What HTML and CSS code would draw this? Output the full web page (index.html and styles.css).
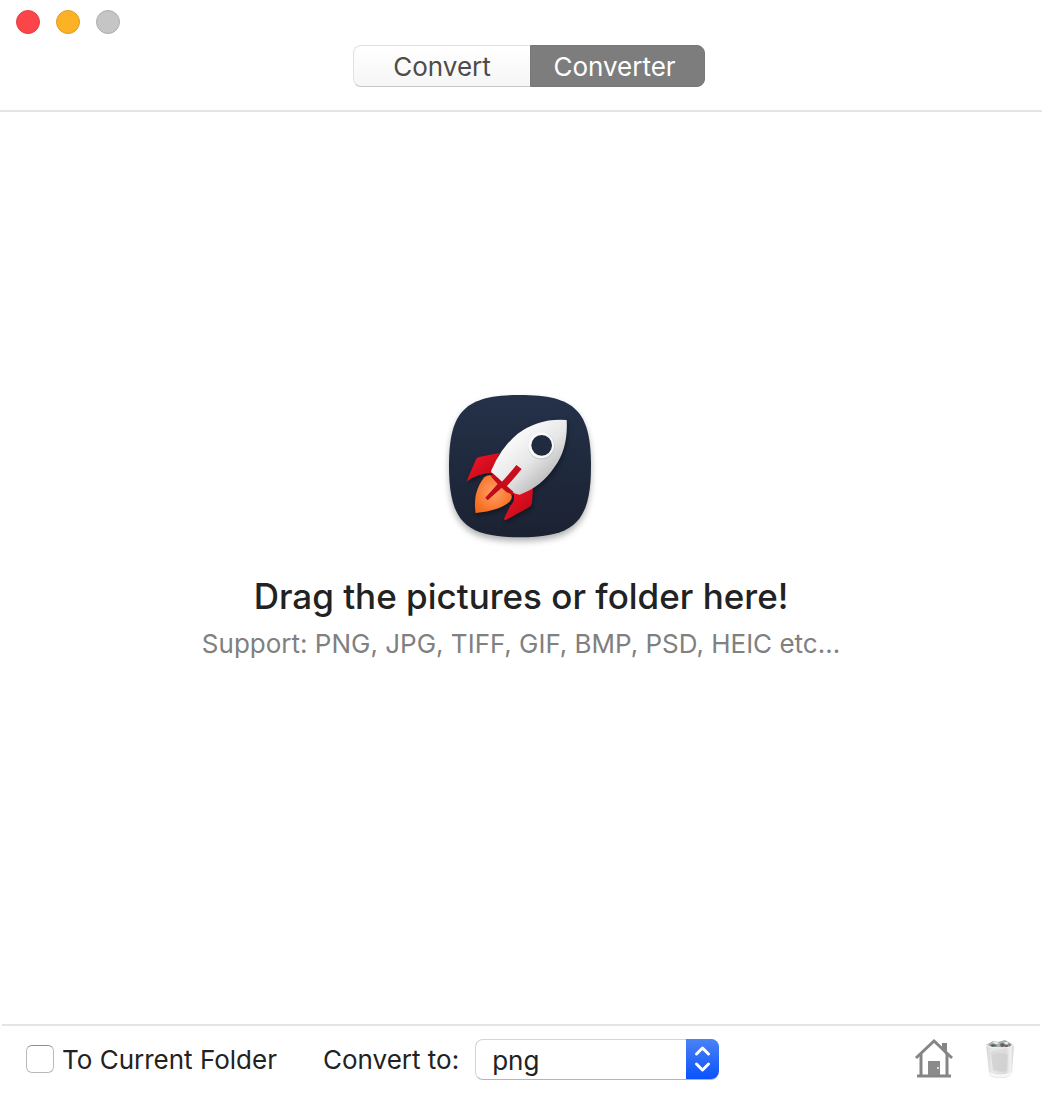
FILE: index.html
```html
<!DOCTYPE html>
<html lang="en">
<head>
      <meta charset="UTF-8">
      <meta name="viewport" content="width=device-width, initial-scale=1.0">
      <title>Converter</title>
      <link rel="stylesheet" href="styles.css">
</head>
<body>
      <header class="titlebar">
            <div class="lights">
                  <button class="light close" aria-label="Close"></button>
                  <button class="light minimize" aria-label="Minimize"></button>
                  <button class="light zoom" aria-label="Zoom" disabled></button>
            </div>
            <nav class="tabs">
                  <button class="tab">Convert</button>
                  <button class="tab active">Converter</button>
            </nav>
      </header>

      <main class="drop">
            <svg class="logo" viewBox="3 0 510 510" aria-hidden="true">
                  <defs>
                        <linearGradient id="tile" x1="0" y1="0" x2="0" y2="1">
                              <stop offset="0" stop-color="#243149"/>
                              <stop offset="1" stop-color="#1b2232"/>
                        </linearGradient>
                        <linearGradient id="hull" x1="0.3" y1="0.3" x2="0.75" y2="0.8">
                              <stop offset="0" stop-color="#f7f7f7"/>
                              <stop offset="0.5" stop-color="#e6e6e7"/>
                              <stop offset="1" stop-color="#bcbcbe"/>
                        </linearGradient>
                        <radialGradient id="flame" cx="0.5" cy="0.45" r="0.6">
                              <stop offset="0" stop-color="#ffa067"/>
                              <stop offset="1" stop-color="#f76a1c"/>
                        </radialGradient>
                        <linearGradient id="fin" x1="0" y1="0" x2="1" y2="1">
                              <stop offset="0" stop-color="#f5142b"/>
                              <stop offset="1" stop-color="#b80812"/>
                        </linearGradient>
                        <filter id="shadow" x="-20%" y="-20%" width="140%" height="140%" color-interpolation-filters="sRGB">
                              <feDropShadow dx="0" dy="12" stdDeviation="10" flood-color="#000" flood-opacity="0.3"/>
                        </filter>
                        <filter id="soft" x="-20%" y="-20%" width="140%" height="140%" color-interpolation-filters="sRGB">
                              <feDropShadow dx="3" dy="7" stdDeviation="6" flood-color="#000" flood-opacity="0.4"/>
                        </filter>
                  </defs>
                  <path filter="url(#shadow)" fill="url(#tile)" d="M255 42C420 42 468 90 468 255S420 469 255 469S42 420 42 255S90 42 255 42Z"/>
                  <g filter="url(#soft)">
                        <path fill="url(#fin)" d="M193 216L132 228Q126 229 123 235L94 302Q130 276 172 276Z"/>
                        <path fill="url(#fin)" d="M294 318L291 366Q290 372 285 377L212 418Q206 418 208 410L226 374Q242 362 235 334Z"/>
                        <path fill="url(#flame)" d="M148 289Q158 280 172 284L227 337Q235 350 224 362Q194 388 122 396Q112 333 148 289Z"/>
                        <path fill="url(#hull)" d="M395 117Q314 110 248 158Q197 201 168 270Q170 280 184 290L218 325Q235 340 254 341Q319 318 358 259Q400 202 395 117Z"/>
                  </g>
                  <path stroke="#c90d1c" stroke-width="20" fill="none" d="M252 258Q225 292 199 318"/>
                  <path fill="#c30a19" d="M172 275L202 303L235 332L235 342L214 333L200 320L158 358L151 350L188 309L169 288Z"/>
                  <circle cx="319" cy="195" r="40" fill="#c5c6c8"/>
                  <circle cx="318" cy="193" r="39" fill="#f8f8f8"/>
                  <circle cx="320" cy="193" r="31" fill="#202b40"/>
            </svg>
            <h1 class="title">Drag the pictures or folder here!</h1>
            <p class="support">Support: PNG, JPG, TIFF, GIF, BMP, PSD, HEIC etc...</p>
      </main>

      <footer class="toolbar">
            <label class="current">
                  <input type="checkbox">
                  <span>To Current Folder</span>
            </label>
            <label class="format-label" for="format">Convert to:</label>
            <div class="format">
                  <select id="format">
                        <option>png</option>
                        <option>jpg</option>
                        <option>tiff</option>
                        <option>gif</option>
                        <option>bmp</option>
                  </select>
                  <svg class="arrows" viewBox="0 0 33 40" aria-hidden="true">
                        <path d="M10.5 15L16.5 9L22.5 15M10.5 25L16.5 31L22.5 25"/>
                  </svg>
            </div>
            <div class="actions">
                  <button aria-label="Home">
                        <svg width="40" height="44" viewBox="0 0 40 44" aria-hidden="true">
                              <path fill="#858585" d="M28 6H33V19L28 13Z"/>
                              <path fill="none" stroke="#858585" stroke-width="3" d="M2 21L20 4L38 21"/>
                              <path fill="none" stroke="#858585" stroke-width="3" d="M7 17V39M33 17V39M3 39H37"/>
                              <path fill="#8b8b8b" d="M14 24H26V38H14Z"/>
                              <circle cx="24" cy="31" r="1" fill="#fff"/>
                        </svg>
                  </button>
                  <button aria-label="Trash">
                        <svg width="40" height="44" viewBox="0 0 40 44" aria-hidden="true">
                              <defs>
                                    <linearGradient id="bin" x1="0" y1="0" x2="1" y2="0">
                                          <stop offset="0" stop-color="#d4d4d4"/>
                                          <stop offset="0.2" stop-color="#e8e8e8"/>
                                          <stop offset="0.7" stop-color="#dadada"/>
                                          <stop offset="0.88" stop-color="#f1f1f1"/>
                                          <stop offset="1" stop-color="#cfcfcf"/>
                                    </linearGradient>
                              </defs>
                              <path fill="url(#bin)" d="M6 7Q20 4 34 8L32 36Q31 41 20 41T9 36Z"/>
                              <path fill="#cdcdcd" opacity="0.7" d="M11 15Q20 13 28 16L27 34Q20 36 13 33Z"/>
                              <path fill="#f7f7f7" d="M9 35Q19 40 32 35L31 38Q20 43 10 38Z"/>
                              <path fill="#a9adae" d="M8 7L13 4L18 5L25 3L32 7L30 10Q19 11 9 9Z"/>
                              <path fill="#5b6062" d="M10 8L14 7L17 9L12 10ZM20 7L23 6L26 9L21 10ZM28 7L31 8L29 9Z"/>
                              <path fill="#dce9e7" d="M12 5L17 4L19 7L15 7ZM24 5L28 5L28 7L25 7Z"/>
                              <path fill="#8d5a55" d="M25 8H28V10H25Z"/>
                              <path fill="none" stroke="#f2f2f2" d="M6 8Q8 11 20 11T34 8"/>
                              <path fill="none" stroke="#e4e4e4" d="M12 17L20 15L28 17"/>
                        </svg>
                  </button>
            </div>
      </footer>
</body>
</html>
```

FILE: styles.css
```css
*{
      box-sizing: border-box;
}
body{
      margin: 0;
      min-height: 100vh;
      display: flex;
      flex-direction: column;
      background: #fff;
      color: #222;
      font-family: Inter, "Liberation Sans", sans-serif;
      font-size: 26px;
      line-height: 32px;
}
button,
select{
      font: inherit;
      color: inherit;
}
.titlebar{
      padding: 10px 0 23px 16px;
      border-bottom: 2px solid #e4e4e4;
}
.lights{
      display: flex;
      gap: 16px;
      margin-bottom: 11px;
}
.light{
      width: 24px;
      height: 24px;
      padding: 0;
      border: 1px solid;
      border-radius: 50%;
}
.close{
      background: #fc4549;
      border-color: #df4146;
}
.minimize{
      background: #fdb225;
      border-color: #dc9d2c;
}
.zoom{
      background: #c5c5c5;
      border-color: #aeaeae;
}
.tabs{
      display: flex;
      justify-content: center;
}
.tab{
      width: 175px;
      height: 42px;
      padding: 2px 6px 0 0;
      border: 1px solid #e2e2e2;
      border-bottom-color: #c6c6c6;
      background: linear-gradient(#fff, #f6f6f6);
      color: #4c4c4c;
}
.tab:first-child{
      width: 177px;
      padding-right: 0;
      border-right: 0;
      border-radius: 8px 0 0 8px;
}
.tab:last-child{
      border-radius: 0 8px 8px 0;
}
.tab.active{
      border-color: #787878;
      background: #7d7d7d;
      color: #fff;
}
.drop{
      flex: 1;
      display: flex;
      flex-direction: column;
      align-items: center;
      justify-content: center;
      padding-bottom: 96px;
      text-align: center;
}
.logo{
      width: 170px;
      height: 170px;
}
.title{
      margin: 23px 0 10px;
      font-size: 35px;
      line-height: 44px;
      font-weight: 500;
}
.support{
      margin: 0;
      color: #808080;
}
.toolbar{
      display: flex;
      align-items: center;
      height: 72px;
      margin: 0 2px;
      padding: 0 20px 4px 24px;
      border-top: 2px solid #e4e4e4;
}
.current{
      display: flex;
      align-items: center;
      gap: 8px;
      margin-right: 46px;
}
.current input{
      appearance: none;
      width: 28px;
      height: 28px;
      margin: 0;
      border: 1px solid #bababa;
      border-top-color: #8e8e8e;
      border-radius: 6px;
      background: #fff;
}
.current input:checked{
      background: #2468f5;
}
.current span,
.format-label{
      padding-top: 2px;
}
.format-label{
      margin-right: 16px;
}
.format{
      position: relative;
      width: 244px;
}
.format select{
      appearance: none;
      display: block;
      width: 100%;
      height: 41px;
      padding: 4px 40px 0 16px;
      border: 1px solid #d5d5d5;
      border-bottom-color: #b5b5b5;
      border-radius: 8px;
      background: #fff;
}
.arrows{
      position: absolute;
      top: 0;
      right: 0;
      width: 33px;
      height: 40px;
      border-radius: 0 8px 8px 0;
      background: linear-gradient(#4a83f5, #0a52fb);
      fill: none;
      stroke: #fff;
      stroke-width: 3;
      stroke-linecap: round;
      stroke-linejoin: round;
      pointer-events: none;
}
.actions{
      display: flex;
      gap: 26px;
      margin-left: auto;
}
.actions button{
      display: flex;
      padding: 0;
      border: 0;
      background: none;
      cursor: pointer;
}
```
